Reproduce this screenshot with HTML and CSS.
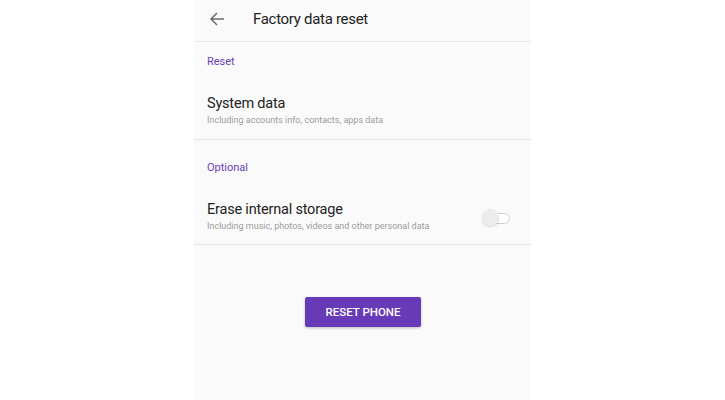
FILE: index.html
```html
<!DOCTYPE html>
<html>
<head>
<meta charset="utf-8">
<link rel="stylesheet" href="styles.css">
</head>
<body>
<div class="phone">
  <div class="header">
    <svg class="back" width="16" height="16" viewBox="0 0 16 16"><path d="M15 8H2M8 2L2 8l6 6" fill="none" stroke="#6b6b6b" stroke-width="1.5"/></svg>
    <div class="title">Factory data reset</div>
  </div>
  <div class="section first">
    <div class="label">Reset</div>
    <div class="item">
      <div class="texts">
        <div class="item-title">System data</div>
        <div class="item-sub">Including accounts info, contacts, apps data</div>
      </div>
    </div>
  </div>
  <div class="section">
    <div class="label">Optional</div>
    <div class="item">
      <div class="texts">
        <div class="item-title">Erase internal storage</div>
        <div class="item-sub">Including music, photos, videos and other personal data</div>
      </div>
      <div class="toggle"><span class="track"></span><span class="thumb"></span></div>
    </div>
  </div>
  <div class="actions">
    <button class="reset-btn">RESET PHONE</button>
  </div>
</div>
</body>
</html>
```
FILE: styles.css
```css
html, body { margin: 0; padding: 0; background: #ffffff; }
body { font-family: Roboto, "Noto Sans", sans-serif; }
.phone { width: 337px; height: 400px; margin: 0 auto; background: #fafafa; }
.header { border-bottom: 1px solid #e8e8e8; display: flex; align-items: center; padding-left: 15px; box-sizing: border-box; height: 42px; }
.back { display: block; margin-top: -4px; }
.title { margin-left: 28px; font-size: 15px; letter-spacing: -0.3px; color: #222; margin-top: -4px; }
.section { border-bottom: 1px solid #e4e4e4; padding: 20px 0 11px 13px; }
.section.first { padding-top: 12px; padding-bottom: 12px; }
.label { font-size: 11px; line-height: 16px; color: #6a3fb5; }
.item { display: flex; align-items: center; margin-top: 25px; }
.texts { flex: 1; }
.item-title { font-size: 14.5px; letter-spacing: -0.2px; line-height: 18px; color: #222; }
.item-sub { font-size: 9px; line-height: 14px; color: #9a9a9a; }
.toggle { position: relative; width: 28px; height: 18px; margin-right: 21px; margin-top: 2px; }
.track { position: absolute; left: 6px; top: 4px; width: 20px; height: 9px; border: 1px solid #cfcfcf; border-radius: 6px; background: #fff; }
.thumb { position: absolute; left: 0; top: 0; width: 17px; height: 17px; border-radius: 50%; background: #ececec; box-shadow: 0 1px 2px rgba(0,0,0,0.15); }
.actions { display: flex; justify-content: center; padding-top: 52px; }
.reset-btn { width: 116px; height: 30px; border: 0; border-radius: 2px; background: #673ab7; color: #fff; font-family: Roboto, sans-serif; font-weight: 500; font-size: 11.5px; padding: 0; margin-left: 1px; box-shadow: 0 1px 3px rgba(0,0,0,0.25); }
```
